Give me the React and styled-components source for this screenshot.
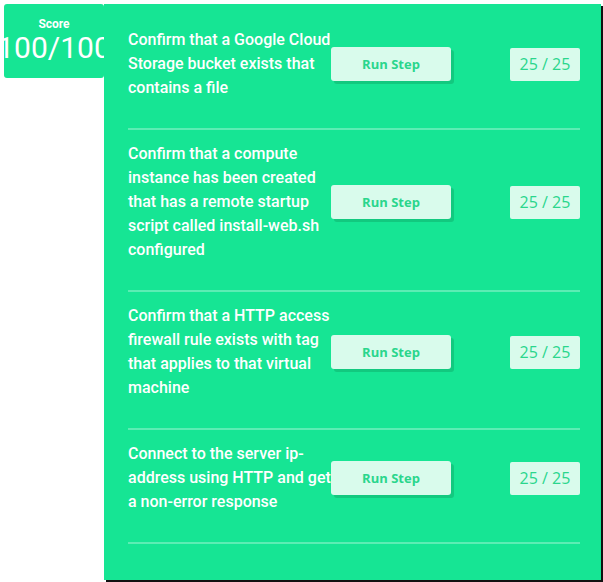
import React from 'react';
import styled, { createGlobalStyle } from 'styled-components';

const GREEN = '#16e594';
const MINT = '#d9fbec';
const INK = '#2ad68c';

const GlobalStyle = createGlobalStyle`
  body {
    margin: 0;
    background: #fff;
    font-family: Roboto, "Liberation Sans", sans-serif;
  }
`;

const Page = styled.div`
  display: flex;
  align-items: flex-start;
  padding: 4px;
`;

const ScoreCard = styled.div`
  width: 100px;
  height: 74px;
  flex-shrink: 0;
  display: flex;
  flex-direction: column;
  align-items: center;
  background: ${GREEN};
  border-radius: 3px;
  color: #fff;
  padding-top: 13px;
  box-sizing: border-box;
`;

const ScoreLabel = styled.div`
  font-size: 12px;
  font-weight: 700;
  line-height: 14px;
`;

const ScoreValue = styled.div`
  font-size: 30px;
  font-weight: 400;
  line-height: 34px;
  white-space: nowrap;
`;

const Panel = styled.section`
  width: 497px;
  height: 576px;
  flex-shrink: 0;
  box-sizing: border-box;
  padding: 12px 21px 0 24px;
  background: ${GREEN};
  box-shadow: 2px 2px 0 #111;
`;

const StepRow = styled.div`
  display: flex;
  align-items: center;
  padding: 12px 0 28px;
  border-bottom: 2px solid rgba(255, 255, 255, 0.3);
`;

const StepText = styled.p`
  width: 203px;
  flex-shrink: 0;
  margin: 0;
  color: #fff;
  font-size: 16px;
  font-weight: 500;
  line-height: 24px;
`;

const RunButton = styled.button`
  width: 120px;
  height: 34px;
  flex-shrink: 0;
  border: none;
  border-radius: 3px;
  background: ${MINT};
  color: ${INK};
  font-family: "Open Sans", sans-serif;
  font-size: 13px;
  font-weight: 700;
  box-shadow: 3px 3px 0 #12c97f;
  cursor: pointer;
`;

const Points = styled.div`
  margin-left: auto;
  width: 70px;
  height: 33px;
  display: flex;
  align-items: center;
  justify-content: center;
  border-radius: 2px;
  background: ${MINT};
  color: ${INK};
  font-family: "Open Sans", sans-serif;
  font-size: 16px;
  font-weight: 500;
`;

const steps = [
  'Confirm that a Google Cloud Storage bucket exists that contains a file',
  'Confirm that a compute instance has been created that has a remote startup script called install-web.sh configured',
  'Confirm that a HTTP access firewall rule exists with tag that applies to that virtual machine',
  'Connect to the server ip-address using HTTP and get a non-error response',
];

export default function App() {
  return (
    <>
      <GlobalStyle />
      <Page>
        <ScoreCard>
          <ScoreLabel>Score</ScoreLabel>
          <ScoreValue>100/100</ScoreValue>
        </ScoreCard>
        <Panel>
          {steps.map((s) => (
            <StepRow key={s}>
              <StepText>{s}</StepText>
              <RunButton>Run Step</RunButton>
              <Points>25 / 25</Points>
            </StepRow>
          ))}
        </Panel>
      </Page>
    </>
  );
}
